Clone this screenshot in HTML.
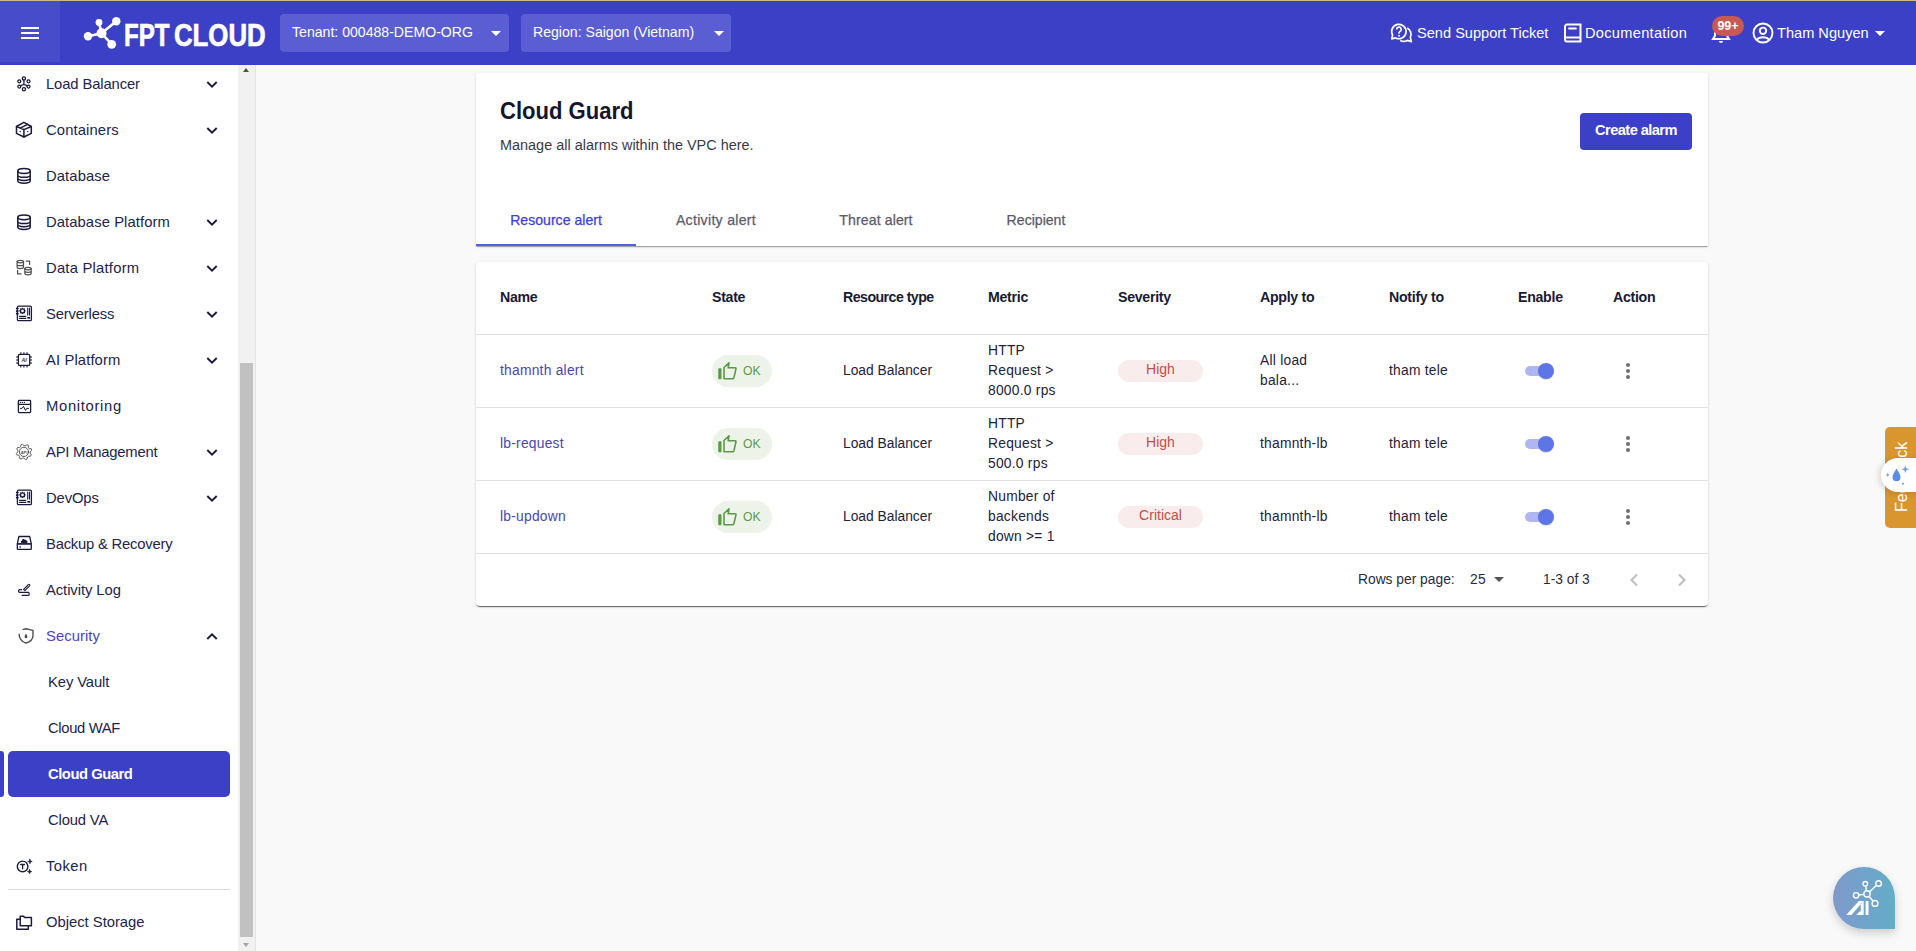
<!DOCTYPE html>
<html><head><meta charset="utf-8">
<style>
*{box-sizing:border-box;margin:0;padding:0}
html,body{width:1916px;height:951px;overflow:hidden;background:#f9f9f9;font-family:"Liberation Sans",sans-serif;color:#1c1c3a}
.abs{position:absolute}
#topline{left:0;top:0;width:1916px;height:1px;background:#c9b98f}
#hdr{left:0;top:1px;width:1916px;height:64px;background:#3c40c6}
#burger{left:0;top:1px;width:60px;height:61px;background:#474cca}
#burger i{position:absolute;left:21px;width:18px;height:2px;background:#fff}
.sel{top:14px;height:38px;border-radius:4px;background:#5a5ed2;color:#fff;font-size:14.1px}
.sel span{position:absolute;top:10px;white-space:nowrap}
.caret{position:absolute;width:0;height:0;border-left:5px solid transparent;border-right:5px solid transparent;border-top:5px solid #fff}
.htxt{color:#fff;font-size:14.6px;white-space:nowrap;top:25px}
.logo{color:#fff;-webkit-text-stroke:0.7px #fff;font-weight:700;font-size:30.5px;line-height:34px;white-space:nowrap;overflow:visible}
/* sidebar */
#side{left:0;top:65px;width:238px;height:886px;background:#fff;overflow:hidden}
.item{position:absolute;left:0;width:238px;height:46px}
.item .t{position:absolute;left:46px;top:0;line-height:46px;font-size:14.8px;white-space:nowrap;color:#24244a}
.item svg.ic{position:absolute;left:16px;top:16px}
.item svg.ch{position:absolute;left:205px;top:19px}
#sb{left:238px;top:65px;width:18px;height:886px;background:#f1f1f1;border-right:1px solid #e3e3e3}
#thumb{left:240px;top:363px;width:13px;height:574px;background:#c1c1c1}
/* cards */
.card{background:#fff;border-radius:4px;box-shadow:0 2px 1px -1px rgba(0,0,0,.2),0 1px 1px 0 rgba(0,0,0,.14),0 1px 3px 0 rgba(0,0,0,.12)}
.title{font-size:24.5px;font-weight:700;color:#15152e;line-height:30px;white-space:nowrap;transform:scaleX(0.9);transform-origin:0 0}
.sub{font-size:14.45px;color:#3a3a4a;line-height:20px;white-space:nowrap}
.btn{background:#3c40c6;border-radius:4px;color:#fff;font-weight:700;font-size:14.6px;text-align:center;line-height:34px;letter-spacing:-0.55px}
.tab{font-size:14.1px;color:#5b5b6b;text-align:center;line-height:40px;white-space:nowrap}
.tab.act{color:#3d41cf}
.tab{-webkit-text-stroke:0.25px currentColor}
.th{font-size:14.2px;font-weight:700;color:#1a1a33;line-height:20px;white-space:nowrap;letter-spacing:-0.3px}
.td{font-size:13.8px;color:#22223a;line-height:20px;white-space:nowrap;margin-top:1px;letter-spacing:0.25px}
.lbt{letter-spacing:0}
.lnk{color:#4a45b5}
.chip{border-radius:16px;white-space:nowrap}
.ok{width:60px;height:32px;background:#eef3ea}
.ok svg{position:absolute;left:6px;top:7px}
.ok span{position:absolute;left:31px;top:0;line-height:32px;font-size:12.2px;color:#5a9a48}
.sev{width:85px;height:22px;background:#f8ecec;color:#c0504a;font-size:14px;line-height:19px;text-align:center;border-radius:11px}
</style></head><body>
<div id="topline" class="abs"></div>
<div id="hdr" class="abs"></div>
<div id="burger" class="abs"><i style="top:26px"></i><i style="top:31px"></i><i style="top:36px"></i></div>
<svg class="abs" style="left:80px;top:16px" width="42" height="34" viewBox="80 16 42 34">
<g stroke="#fff" stroke-width="2.6" stroke-linecap="round"><path d="M101.5 33.3L88 36.2M101.5 33.3L99 22.4M101.5 33.3L116.3 21.2M101.5 33.3L111.7 44.2"/></g>
<g fill="#fff"><circle cx="101.5" cy="33.3" r="5"/><circle cx="88" cy="36.2" r="4.2"/><circle cx="99" cy="22.4" r="3.4"/><circle cx="116.3" cy="21.2" r="4.2"/><circle cx="111.7" cy="44.3" r="4.4"/></g></svg>
<div class="abs logo" style="left:124px;top:18px;transform:scaleX(0.79);transform-origin:0 0">FPT</div>
<div class="abs logo" style="left:173.5px;top:18px;transform:scaleX(0.845);transform-origin:0 0">CLOUD</div>
<div class="abs sel" style="left:280px;width:229px"><span style="left:12px">Tenant: 000488-DEMO-ORG</span><i class="caret" style="left:211px;top:17px"></i></div>
<div class="abs sel" style="left:521px;width:210px"><span style="left:12px">Region: Saigon (Vietnam)</span><i class="caret" style="left:193px;top:17px"></i></div>
<svg class="abs" style="left:1385px;top:18px" width="32" height="30" viewBox="1385 18 32 30" fill="none" stroke="#fff" stroke-width="1.7" stroke-linejoin="round">
<path d="M1392.6 35A7.2 7.2 0 1 1 1395.6 37.9L1391.8 38.8Z"/>
<path d="M1407.3 27.9A7.4 7.4 0 0 1 1410.3 37.4L1411.3 41.6L1407.3 40.4A7.4 7.4 0 0 1 1400.2 40.4"/>
<path d="M1396.6 29.4a2.3 2.3 0 1 1 3.4 2c-.7.4-1 .9-1 1.7v.6" stroke-width="1.6"/><rect x="1398.2" y="34.9" width="1.7" height="1.7" fill="#fff" stroke="none"/></svg>
<div class="abs htxt" style="left:1417px">Send Support Ticket</div>
<svg class="abs" style="left:1564px;top:23px" width="18" height="20" viewBox="0 0 18 20" fill="none" stroke="#fff" stroke-width="2"><path d="M3 1.5H16.5V18.5H3A2 2 0 0 1 1 16.5V3.5A2 2 0 0 1 3 1.5Z"/><path d="M1 14.5H16.5"/><path d="M5 5.5H12" stroke-width="1.8" stroke-linecap="round"/></svg>
<div class="abs htxt" style="left:1585px;letter-spacing:0.3px">Documentation</div>
<svg class="abs" style="left:1711px;top:22px" width="20" height="22" viewBox="0 0 20 22" fill="#fff"><path d="M10 2c3.5 0 6 2.7 6 6.2v5.5l2 3.3H2l2-3.3V8.2C4 4.7 6.5 2 10 2z" fill="none" stroke="#fff" stroke-width="2"/><path d="M8 19h4a2 2 0 0 1-4 0z"/></svg>
<div class="abs" style="left:1712px;top:16px;width:32px;height:20px;border-radius:10px;background:#c75a52;color:#fff;font-size:12.5px;font-weight:700;text-align:center;line-height:20px">99+</div>
<svg class="abs" style="left:1752px;top:22px" width="22" height="22" viewBox="0 0 22 22" fill="none" stroke="#fff" stroke-width="1.9"><circle cx="11" cy="11" r="9.5"/><circle cx="11" cy="8.8" r="3.2"/><path d="M4.6 18c1.5-1.9 3.8-2.8 6.4-2.8s4.9.9 6.4 2.8"/></svg>
<div class="abs htxt" style="left:1777px">Tham Nguyen</div>
<i class="caret abs" style="left:1875px;top:31px"></i>

<div id="side" class="abs">
<div class="item" style="top:-4px"><svg class="ic" style="left:0;top:0" width="42" height="46" viewBox="0 61 42 46" fill="none" stroke="#1b1b3d" stroke-width="1.3" stroke-linecap="round" stroke-linejoin="round" ><circle cx="23.9" cy="78.4" r="1.6"/><circle cx="19.3" cy="81.3" r="1.5"/><circle cx="28.5" cy="81.3" r="1.5"/><circle cx="19.3" cy="86.6" r="1.5"/><circle cx="28.5" cy="86.6" r="1.5"/><circle cx="23.9" cy="89.3" r="1.6"/><path d="M23.9 80V84.3M20.7 85.8Q23.9 83.4 27.1 85.8"/></svg><span class="t" style="color:#24244a;letter-spacing:-0.122px;">Load Balancer</span><svg class="ch" style="left:205px;top:19px" width="14" height="9" viewBox="0 0 14 9"><path d="M2.3 2L7 6.6L11.7 2" fill="none" stroke="#1a1a40" stroke-width="1.9"/></svg></div>
<div class="item" style="top:42px"><svg class="ic" style="left:0;top:0" width="42" height="46" viewBox="0 107 42 46" fill="none" stroke="#1b1b3d" stroke-width="1.5" stroke-linecap="round" stroke-linejoin="round" ><path d="M23.9 122.3L31.3 126.5V133.4L23.9 137L16.5 133.4V126.5Z"/><path d="M16.5 126.5L23.9 129.6L31.3 126.5M23.9 129.6V137M20.2 128.1L27.6 124.3"/><path d="M20.1 131.6h.3M27.6 131.6h.3" stroke-width="1.2"/></svg><span class="t" style="color:#24244a;letter-spacing:0.112px;">Containers</span><svg class="ch" style="left:205px;top:19px" width="14" height="9" viewBox="0 0 14 9"><path d="M2.3 2L7 6.6L11.7 2" fill="none" stroke="#1a1a40" stroke-width="1.9"/></svg></div>
<div class="item" style="top:88px"><svg class="ic" style="left:0;top:0" width="42" height="46" viewBox="0 153 42 46" fill="none" stroke="#1b1b3d" stroke-width="1.5" stroke-linecap="round" stroke-linejoin="round" ><ellipse cx="24" cy="171" rx="6.2" ry="2.4"/><path d="M17.8 171V180.8C17.8 182.2 20.6 183.2 24 183.2S30.2 182.2 30.2 180.8V171M17.8 174.9C17.8 176.3 20.6 177.3 24 177.3S30.2 176.3 30.2 174.9M17.8 178C17.8 179.4 20.6 180.4 24 180.4S30.2 179.4 30.2 178"/></svg><span class="t" style="color:#24244a;letter-spacing:0.093px;">Database</span></div>
<div class="item" style="top:134px"><svg class="ic" style="left:0;top:0" width="42" height="46" viewBox="0 199 42 46" fill="none" stroke="#1b1b3d" stroke-width="1.5" stroke-linecap="round" stroke-linejoin="round" ><ellipse cx="24" cy="217.3" rx="6.2" ry="2.4"/><path d="M17.8 217.3V227.10000000000002C17.8 228.5 20.6 229.5 24 229.5S30.2 228.5 30.2 227.10000000000002V217.3M17.8 221.20000000000002C17.8 222.60000000000002 20.6 223.60000000000002 24 223.60000000000002S30.2 222.60000000000002 30.2 221.20000000000002M17.8 224.3C17.8 225.70000000000002 20.6 226.70000000000002 24 226.70000000000002S30.2 225.70000000000002 30.2 224.3"/></svg><span class="t" style="color:#24244a;letter-spacing:0.078px;">Database Platform</span><svg class="ch" style="left:205px;top:19px" width="14" height="9" viewBox="0 0 14 9"><path d="M2.3 2L7 6.6L11.7 2" fill="none" stroke="#1a1a40" stroke-width="1.9"/></svg></div>
<div class="item" style="top:180px"><svg class="ic" style="left:0;top:0" width="42" height="46" viewBox="0 245 42 46" fill="none" stroke="#505050" stroke-width="1.2" stroke-linecap="round" stroke-linejoin="round" ><ellipse cx="20.3" cy="261.6" rx="3.2" ry="1.3"/><path d="M17.1 261.6V267.3C17.1 268 18.5 268.6 20.3 268.6S23.5 268 23.5 267.3V261.6M17.1 264.4C17.1 265.1 18.5 265.7 20.3 265.7S23.5 265.1 23.5 264.4"/><ellipse cx="28" cy="268.6" rx="3.2" ry="1.3"/><path d="M24.8 268.6V273.6C24.8 274.3 26.2 274.9 28 274.9S31.2 274.3 31.2 273.6V268.6M24.8 271.1C24.8 271.8 26.2 272.4 28 272.4S31.2 271.8 31.2 271.1"/><path d="M26.3 261.1H29.6V264.5M17.6 270.3V273.9H21"/></svg><span class="t" style="color:#24244a;letter-spacing:0.221px;">Data Platform</span><svg class="ch" style="left:205px;top:19px" width="14" height="9" viewBox="0 0 14 9"><path d="M2.3 2L7 6.6L11.7 2" fill="none" stroke="#1a1a40" stroke-width="1.9"/></svg></div>
<div class="item" style="top:226px"><svg class="ic" style="left:0;top:0" width="42" height="46" viewBox="0 291 42 46" fill="none" stroke="#1b1b3d" stroke-width="1.3" stroke-linecap="round" stroke-linejoin="round" ><rect x="17.4" y="306.1" width="14" height="14.5" rx="1.2"/><path d="M16.7 308.5h1.2M16.7 311.1h1.2M16.7 313.7h1.2" stroke-width="1.7"/><circle cx="22.5" cy="310.90" r="2"/><path d="M24.60 310.90L25.70 310.90 M23.98 312.38L24.76 313.16 M22.50 313.00L22.50 314.10 M21.02 312.38L20.24 313.16 M20.40 310.90L19.30 310.90 M21.02 309.42L20.24 308.64 M22.50 308.80L22.50 307.70 M23.98 309.42L24.76 308.64" stroke-width="1.3" stroke-linecap="butt"/><path d="M27.7 308.1V315.1M29.5 308.1V315.1M19.6 316.4H25.8M19.6 318.4H25.8" stroke-width="1.1"/><rect x="27.3" y="316.9" width="2.8" height="1.8" fill="#1b1b3d" stroke="none"/></svg><span class="t" style="color:#24244a;letter-spacing:-0.172px;">Serverless</span><svg class="ch" style="left:205px;top:19px" width="14" height="9" viewBox="0 0 14 9"><path d="M2.3 2L7 6.6L11.7 2" fill="none" stroke="#1a1a40" stroke-width="1.9"/></svg></div>
<div class="item" style="top:272px"><svg class="ic" style="left:0;top:0" width="42" height="46" viewBox="0 337 42 46" fill="none" stroke="#1b1b3d" stroke-width="1.3" stroke-linecap="round" stroke-linejoin="round" ><rect x="18.4" y="354.3" width="11.3" height="11.1" rx="1.2"/><path d="M20.8 352.2V354M23.9 352.2V354M27 352.2V354M20.8 365.7V367.6M23.9 365.7V367.6M27 365.7V367.6M16.2 357H18M16.2 360H18M16.2 363H18M30 357H31.9M30 360H31.9M30 363H31.9" stroke-width="1.4" stroke-linecap="butt" stroke-opacity=".8"/><text x="24" y="361.9" font-size="5.2" text-anchor="middle" fill="#333" stroke="none" font-family="Liberation Sans" font-weight="700" font-style="italic">AI</text></svg><span class="t" style="color:#24244a;letter-spacing:0.113px;">AI Platform</span><svg class="ch" style="left:205px;top:19px" width="14" height="9" viewBox="0 0 14 9"><path d="M2.3 2L7 6.6L11.7 2" fill="none" stroke="#1a1a40" stroke-width="1.9"/></svg></div>
<div class="item" style="top:318px"><svg class="ic" style="left:0;top:0" width="42" height="46" viewBox="0 383 42 46" fill="none" stroke="#1b1b3d" stroke-width="1.3" stroke-linecap="round" stroke-linejoin="round" ><rect x="18.4" y="400.4" width="12.2" height="12.2" rx=".8"/><path d="M18.4 404.3H30.6"/><path d="M20.3 402.4h.1M22.3 402.4h.1M24.3 402.4h.1" stroke-width="1.2"/><path d="M20.4 408.4H22L23.5 406.4L25.5 410.5L26.7 408.4H28.6" stroke-width="1"/></svg><span class="t" style="color:#24244a;letter-spacing:0.671px;">Monitoring</span></div>
<div class="item" style="top:364px"><svg class="ic" style="left:0;top:0" width="42" height="46" viewBox="0 429 42 46" fill="none" stroke="#4a4a4a" stroke-width="0.9" stroke-linecap="round" stroke-linejoin="round" ><path d="M31.21 448.92 L31.65 450.38 L30.20 451.90 L30.08 453.11 L31.21 454.88 L30.49 456.23 L28.38 456.28 L27.44 457.06 L26.98 459.11 L25.52 459.55 L24.00 458.10 L22.79 457.98 L21.02 459.11 L19.67 458.39 L19.62 456.28 L18.84 455.34 L16.79 454.88 L16.35 453.42 L17.80 451.90 L17.92 450.69 L16.79 448.92 L17.51 447.57 L19.62 447.52 L20.56 446.74 L21.02 444.69 L22.48 444.25 L24.00 445.70 L25.21 445.82 L26.98 444.69 L28.33 445.41 L28.38 447.52 L29.16 448.46Z"/><circle cx="24" cy="451.9" r="4.6"/><text x="24" y="453.5" font-size="4" text-anchor="middle" fill="#505050" stroke="none" font-family="Liberation Sans" font-weight="700">API</text></svg><span class="t" style="color:#24244a;letter-spacing:-0.216px;">API Management</span><svg class="ch" style="left:205px;top:19px" width="14" height="9" viewBox="0 0 14 9"><path d="M2.3 2L7 6.6L11.7 2" fill="none" stroke="#1a1a40" stroke-width="1.9"/></svg></div>
<div class="item" style="top:410px"><svg class="ic" style="left:0;top:0" width="42" height="46" viewBox="0 475 42 46" fill="none" stroke="#1b1b3d" stroke-width="1.3" stroke-linecap="round" stroke-linejoin="round" ><rect x="17.4" y="490.1" width="14" height="14.5" rx="1.2"/><path d="M16.7 492.5h1.2M16.7 495.1h1.2M16.7 497.7h1.2" stroke-width="1.7"/><circle cx="22.5" cy="494.90" r="2"/><path d="M24.60 494.90L25.70 494.90 M23.98 496.38L24.76 497.16 M22.50 497.00L22.50 498.10 M21.02 496.38L20.24 497.16 M20.40 494.90L19.30 494.90 M21.02 493.42L20.24 492.64 M22.50 492.80L22.50 491.70 M23.98 493.42L24.76 492.64" stroke-width="1.3" stroke-linecap="butt"/><path d="M27.7 492.1V499.1M29.5 492.1V499.1M19.6 500.4H25.8M19.6 502.4H25.8" stroke-width="1.1"/><rect x="27.3" y="500.9" width="2.8" height="1.8" fill="#1b1b3d" stroke="none"/></svg><span class="t" style="color:#24244a;letter-spacing:-0.114px;">DevOps</span><svg class="ch" style="left:205px;top:19px" width="14" height="9" viewBox="0 0 14 9"><path d="M2.3 2L7 6.6L11.7 2" fill="none" stroke="#1a1a40" stroke-width="1.9"/></svg></div>
<div class="item" style="top:456px"><svg class="ic" style="left:0;top:0" width="42" height="46" viewBox="0 521 42 46" fill="none" stroke="#1b1b3d" stroke-width="1.3" stroke-linecap="round" stroke-linejoin="round" ><path d="M18.9 536.5H29.7L31.3 543.8H17.3Z"/><rect x="17.3" y="543.8" width="14" height="5.6" rx=".6"/><path d="M20.1 546.2v1.4" stroke-width="1"/><path d="M21.7 542.9C20.4 542.9 20.4 540.8 21.8 540.7C21.9 538.9 24.3 538.4 25 540C25.6 539.6 26.7 540 26.7 541C27.9 541 28 542.9 26.8 542.9Z" fill="#1b1b3d" stroke="none"/></svg><span class="t" style="color:#24244a;letter-spacing:-0.212px;">Backup &amp; Recovery</span></div>
<div class="item" style="top:502px"><svg class="ic" style="left:0;top:0" width="42" height="46" viewBox="0 567 42 46" fill="none" stroke="#1b1b3d" stroke-width="1.2" stroke-linecap="round" stroke-linejoin="round" ><path d="M24.9 590.6L23.6 589.3L28.3 584.6A0.9 0.9 0 0 1 29.6 584.6L29.6 584.6A0.9 0.9 0 0 1 29.6 585.9Z" stroke-width="1.1"/><path d="M25.9 588h.01M27.1 586.8h.01" stroke-width="0.9"/><path d="M21.7 589.7H19.7C18.2 589.7 18.2 592.4 19.7 592.4H28.3C29.5 592.4 29.5 595.4 28.3 595.4H22.2" stroke-width="1.2"/></svg><span class="t" style="color:#24244a;letter-spacing:-0.073px;">Activity Log</span></div>
<div class="item" style="top:548px"><svg class="ic" style="left:0;top:0" width="42" height="46" viewBox="0 613 42 46" fill="none" stroke="#505050" stroke-width="1.4" stroke-linecap="round" stroke-linejoin="round" ><path d="M23.3 629.4L25.9 628.8L33 630.4V635.4C33 639 30 641.8 25.9 643.2C22 641.6 19.2 638.4 19.1 634.2"/><path d="M26 633.6C25.2 635 24.6 635.8 24.6 636.9A1.4 1.4 0 0 0 27.4 636.9C27.4 635.8 26.8 635 26 633.6Z" fill="#505050" stroke="none"/></svg><span class="t" style="color:#4b45c2;letter-spacing:0.061px;">Security</span><svg class="ch" style="left:205px;top:19px" width="14" height="9" viewBox="0 0 14 9"><path d="M2.3 7L7 2.4L11.7 7" fill="none" stroke="#1a1a40" stroke-width="1.9"/></svg></div>
<div class="item" style="top:594px"><span class="t" style="left:48px;letter-spacing:-0.106px;">Key Vault</span></div>
<div class="item" style="top:640px"><span class="t" style="left:48px;letter-spacing:-0.345px;">Cloud WAF</span></div>
<div class="abs" style="left:0;top:686px;width:4px;height:46px;background:#3c40c6;border-radius:0 3px 3px 0"></div>
<div class="item" style="top:686px;left:8px;width:222px;background:#3c40c6;border-radius:5px"><span class="t" style="left:40px;color:#fff;font-weight:700;letter-spacing:-0.471px;">Cloud Guard</span></div>
<div class="item" style="top:732px"><span class="t" style="left:48px;letter-spacing:-0.158px;">Cloud VA</span></div>
<div class="item" style="top:778px"><svg class="ic" style="left:0;top:0" width="42" height="46" viewBox="0 843 42 46" fill="none" stroke="#1b1b3d" stroke-width="1.4" stroke-linecap="round" stroke-linejoin="round" ><circle cx="22.6" cy="866.4" r="5.3"/><path d="M20.7 864.5H24.5M22.6 864.5V868.8" stroke-width="1.3"/><path d="M29.9 859.2L30.5 860.9L32.2 861.5L30.5 862.1L29.9 863.8L29.3 862.1L27.6 861.5L29.3 860.9Z M29.6 869.4L30.2 871L31.8 871.6L30.2 872.2L29.6 873.8L29 872.2L27.4 871.6L29 871Z" fill="#1b1b3d" stroke-width=".6"/></svg><span class="t" style="color:#24244a;letter-spacing:0.42px;">Token</span></div>
<div class="abs" style="left:8px;top:824px;width:222px;height:1px;background:#dcdce6"></div>
<div class="item" style="top:834px"><svg class="ic" style="left:0;top:0" width="42" height="46" viewBox="0 899 42 46" fill="none" stroke="#1b1b3d" stroke-width="1.5" stroke-linecap="round" stroke-linejoin="round" stroke-linejoin="miter"><path d="M20.2 925.8V916.2H23.6L24.6 917.6H31.4V925.8Z"/><path d="M20.2 919.3H16.8V929.3H28.3V925.8"/></svg><span class="t" style="letter-spacing:-0.014px;">Object Storage</span></div>
</div>
<div id="sb" class="abs"></div>
<div id="thumb" class="abs"></div>

<div class="card abs" style="left:476px;top:73px;width:1232px;height:173px;border-radius:4px 4px 0 0"></div>
<div class="abs title" style="left:500px;top:96px">Cloud Guard</div>
<div class="abs sub" style="left:500px;top:135px">Manage all alarms within the VPC here.</div>
<div class="abs btn" style="left:1580px;top:113px;width:112px;height:37px">Create alarm</div>
<div class="abs tab act" style="left:476px;top:200px;width:160px">Resource alert</div>
<div class="abs tab" style="left:636px;top:200px;width:160px;letter-spacing:0.3px">Activity alert</div>
<div class="abs tab" style="left:796px;top:200px;width:160px;letter-spacing:0.1px">Threat alert</div>
<div class="abs tab" style="left:956px;top:200px;width:160px">Recipient</div>
<div class="abs" style="left:476px;top:244px;width:160px;height:2px;background:#5060e2"></div>
<div class="card abs" style="left:476px;top:262px;width:1232px;height:344px;box-shadow:0 2px 1px -1px rgba(0,0,0,.45),0 1px 1px 0 rgba(0,0,0,.2),0 1px 3px 0 rgba(0,0,0,.12)"></div>
<div class="abs th" style="left:500px;top:287px">Name</div>
<div class="abs th" style="left:712px;top:287px">State</div>
<div class="abs th" style="left:843px;top:287px;letter-spacing:-0.55px">Resource type</div>
<div class="abs th" style="left:988px;top:287px">Metric</div>
<div class="abs th" style="left:1118px;top:287px">Severity</div>
<div class="abs th" style="left:1260px;top:287px">Apply to</div>
<div class="abs th" style="left:1389px;top:287px">Notify to</div>
<div class="abs th" style="left:1518px;top:287px">Enable</div>
<div class="abs th" style="left:1613px;top:287px">Action</div>
<div class="abs" style="left:476px;top:334px;width:1232px;height:1px;background:#e0e0e0"></div>
<div class="abs" style="left:476px;top:407px;width:1232px;height:1px;background:#e0e0e0"></div>
<div class="abs" style="left:476px;top:480px;width:1232px;height:1px;background:#e0e0e0"></div>
<div class="abs" style="left:476px;top:553px;width:1232px;height:1px;background:#e0e0e0"></div>
<div class="abs td lnk" style="left:500px;top:360px">thamnth alert</div>
<div class="abs chip ok" style="left:712px;top:355px"><svg width="20" height="18" viewBox="0 0 20 18" fill="none" stroke="#5a9a48" stroke-width="1.6" stroke-linejoin="round"><rect x="0.8" y="6.8" width="2.2" height="10" fill="#5a9a48" stroke="#5a9a48" stroke-width="1"/><path d="M6 16.8V5.5L11 0.8L10.2 5.8H17.2Q18.2 5.8 17.9 7.2L15.9 15.8Q15.6 16.8 14.6 16.8Z"/></svg><span>OK</span></div>
<div class="abs td" style="left:843px;top:360px;letter-spacing:0">Load Balancer</div>
<div class="abs td" style="left:988px;top:340px">HTTP<br>Request &gt;<br>8000.0 rps</div>
<div class="abs chip sev" style="left:1118px;top:360px">High</div>
<div class="abs td" style="left:1260px;top:350px">All load<br>bala...</div>
<div class="abs td" style="left:1389px;top:360px">tham tele</div>
<div class="abs" style="left:1525px;top:366px;width:26px;height:10px;border-radius:5px;background:#aeb7f2"></div>
<div class="abs" style="left:1538px;top:363px;width:16px;height:16px;border-radius:50%;background:#5e75e8;box-shadow:0 1px 1px rgba(0,0,0,.15)"></div>
<div class="abs" style="left:1626px;top:363px;width:4px;height:4px;border-radius:50%;background:#6f6f6f"></div>
<div class="abs" style="left:1626px;top:369px;width:4px;height:4px;border-radius:50%;background:#6f6f6f"></div>
<div class="abs" style="left:1626px;top:375px;width:4px;height:4px;border-radius:50%;background:#6f6f6f"></div>
<div class="abs td lnk" style="left:500px;top:433px">lb-request</div>
<div class="abs chip ok" style="left:712px;top:428px"><svg width="20" height="18" viewBox="0 0 20 18" fill="none" stroke="#5a9a48" stroke-width="1.6" stroke-linejoin="round"><rect x="0.8" y="6.8" width="2.2" height="10" fill="#5a9a48" stroke="#5a9a48" stroke-width="1"/><path d="M6 16.8V5.5L11 0.8L10.2 5.8H17.2Q18.2 5.8 17.9 7.2L15.9 15.8Q15.6 16.8 14.6 16.8Z"/></svg><span>OK</span></div>
<div class="abs td" style="left:843px;top:433px;letter-spacing:0">Load Balancer</div>
<div class="abs td" style="left:988px;top:413px">HTTP<br>Request &gt;<br>500.0 rps</div>
<div class="abs chip sev" style="left:1118px;top:433px">High</div>
<div class="abs td" style="left:1260px;top:433px">thamnth-lb</div>
<div class="abs td" style="left:1389px;top:433px">tham tele</div>
<div class="abs" style="left:1525px;top:439px;width:26px;height:10px;border-radius:5px;background:#aeb7f2"></div>
<div class="abs" style="left:1538px;top:436px;width:16px;height:16px;border-radius:50%;background:#5e75e8;box-shadow:0 1px 1px rgba(0,0,0,.15)"></div>
<div class="abs" style="left:1626px;top:436px;width:4px;height:4px;border-radius:50%;background:#6f6f6f"></div>
<div class="abs" style="left:1626px;top:442px;width:4px;height:4px;border-radius:50%;background:#6f6f6f"></div>
<div class="abs" style="left:1626px;top:448px;width:4px;height:4px;border-radius:50%;background:#6f6f6f"></div>
<div class="abs td lnk" style="left:500px;top:506px">lb-updown</div>
<div class="abs chip ok" style="left:712px;top:501px"><svg width="20" height="18" viewBox="0 0 20 18" fill="none" stroke="#5a9a48" stroke-width="1.6" stroke-linejoin="round"><rect x="0.8" y="6.8" width="2.2" height="10" fill="#5a9a48" stroke="#5a9a48" stroke-width="1"/><path d="M6 16.8V5.5L11 0.8L10.2 5.8H17.2Q18.2 5.8 17.9 7.2L15.9 15.8Q15.6 16.8 14.6 16.8Z"/></svg><span>OK</span></div>
<div class="abs td" style="left:843px;top:506px;letter-spacing:0">Load Balancer</div>
<div class="abs td" style="left:988px;top:486px">Number of<br>backends<br>down &gt;= 1</div>
<div class="abs chip sev" style="left:1118px;top:506px">Critical</div>
<div class="abs td" style="left:1260px;top:506px">thamnth-lb</div>
<div class="abs td" style="left:1389px;top:506px">tham tele</div>
<div class="abs" style="left:1525px;top:512px;width:26px;height:10px;border-radius:5px;background:#aeb7f2"></div>
<div class="abs" style="left:1538px;top:509px;width:16px;height:16px;border-radius:50%;background:#5e75e8;box-shadow:0 1px 1px rgba(0,0,0,.15)"></div>
<div class="abs" style="left:1626px;top:509px;width:4px;height:4px;border-radius:50%;background:#6f6f6f"></div>
<div class="abs" style="left:1626px;top:515px;width:4px;height:4px;border-radius:50%;background:#6f6f6f"></div>
<div class="abs" style="left:1626px;top:521px;width:4px;height:4px;border-radius:50%;background:#6f6f6f"></div>
<div class="abs td" style="left:1358px;top:569px;color:#2a2a40;letter-spacing:0">Rows per page:</div>
<div class="abs td" style="left:1470px;top:569px;color:#2a2a40">25</div>
<i class="caret abs" style="left:1494px;top:577px;border-top-color:#555;border-width:5px 5px 0"></i>
<div class="abs td" style="left:1543px;top:569px;color:#2a2a40;letter-spacing:0">1-3 of 3</div>
<svg class="abs" style="left:1628px;top:573px" width="12" height="14" viewBox="0 0 12 14"><path d="M9 1.5L3.5 7L9 12.5" fill="none" stroke="#bdbdbd" stroke-width="2"/></svg>
<svg class="abs" style="left:1676px;top:573px" width="12" height="14" viewBox="0 0 12 14"><path d="M3 1.5L8.5 7L3 12.5" fill="none" stroke="#bdbdbd" stroke-width="2"/></svg>
<div class="abs" style="left:243px;top:68px;width:0;height:0;border-left:3.7px solid transparent;border-right:3.7px solid transparent;border-bottom:4.3px solid #505050"></div>
<div class="abs" style="left:243px;top:943px;width:0;height:0;border-left:3.6px solid transparent;border-right:3.6px solid transparent;border-top:4.3px solid #a3a3a3"></div>
<div class="abs" style="left:1885px;top:427px;width:40px;height:101px;border-radius:5px;background:#d9962f"></div>
<div class="abs" style="left:1884px;top:427px;width:101px;height:32px;transform-origin:0 0;transform:translate(12px,101px) rotate(-90deg);color:#fff;font-size:16px;line-height:12px;white-space:nowrap;padding-left:16px">Feedback</div>
<div class="abs" style="left:1881px;top:458px;width:60px;height:34px;border-radius:17px;background:#fff;box-shadow:-2px 1px 6px rgba(0,0,0,.15)"></div>
<svg class="abs" style="left:1884px;top:465px" width="28" height="22" viewBox="0 0 28 22"><path d="M12.5 3.5C10.5 7 8.5 9.5 8.5 12.3a4 4 0 0 0 8 0c0-2.8-2-5.3-4-8.8z" fill="#5b8de8"/><path d="M21.3 0.5l1 2.7 2.7 1-2.7 1-1 2.7-1-2.7-2.7-1 2.7-1z" fill="#6d9bf0"/><path d="M3.7 7.7l.6 1.6 1.6.6-1.6.6-.6 1.6-.6-1.6-1.6-.6 1.6-.6z" fill="#6d9bf0"/><circle cx="19" cy="18.7" r="1" fill="#6d9bf0"/></svg>
<div class="abs" style="left:1833px;top:867px;width:62px;height:62px;border-radius:31px 31px 0 31px;background:linear-gradient(90deg,#7f99cb,#63adc8);box-shadow:0 4px 10px rgba(0,0,0,.18)"></div>
<svg class="abs" style="left:1833px;top:867px" width="62" height="62" viewBox="0 0 62 62" fill="none" stroke="#fff" stroke-width="1.4">
<circle cx="32.3" cy="16.8" r="2.3"/><circle cx="45.6" cy="16.5" r="2.8"/><circle cx="23.1" cy="28.3" r="2.7"/><circle cx="34" cy="26.9" r="3.1"/><circle cx="42" cy="36.4" r="2.9"/>
<path d="M32.8 19.1L33.4 23.8M36.4 25L43.5 18.3M25.8 28L30.9 27.4M36 29.3L40.1 34.2"/>
<path d="M13.2 48L18.4 48L30.7 34L25.9 34Z M23.1 48L26.5 44.4L27.8 44.4L27.8 36.4L30.7 34L30.7 48Z M32.6 34H35.5V48H32.6Z" fill="#fff" stroke="none"/></svg>
</body></html>
